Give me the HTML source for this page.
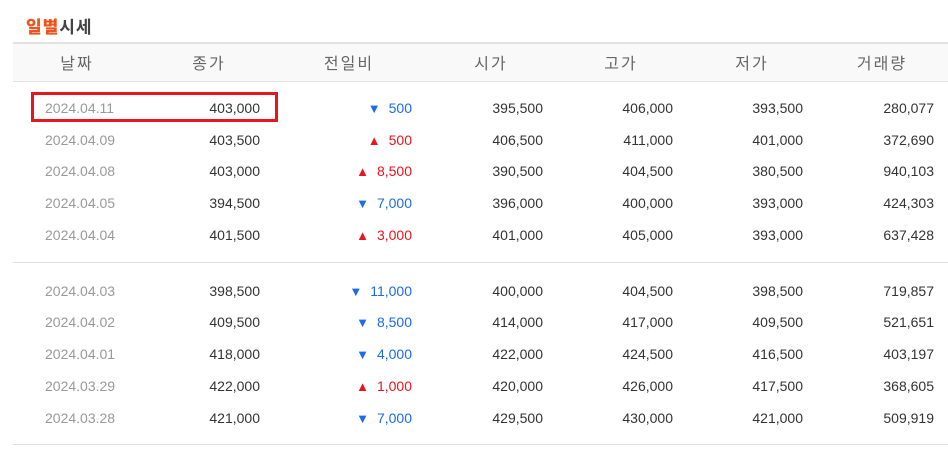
<!DOCTYPE html><html><head><meta charset="utf-8"><style>
body{margin:0;width:948px;height:450px;background:#fff;font-family:"Liberation Sans","Noto Sans CJK KR",sans-serif;position:relative;overflow:hidden}
.t{position:absolute;left:26px;top:13px;font-size:17px;font-weight:bold;color:#444;letter-spacing:1px}
.t b{color:#f0521c}
.hd{position:absolute;left:13px;right:0;top:42px;height:37px;background:#f9f9f9;border-top:2px solid #e2e2e2;border-bottom:1px solid #e2e2e2}
.h{position:absolute;top:50px;font-size:16px;color:#666;width:100px;text-align:center;letter-spacing:2px}
.r{position:absolute;left:0;width:948px;height:18px;font-size:14px;color:#333;line-height:18px}
.r span{position:absolute;white-space:nowrap}
.d{left:45px;color:#999}
.c{right:688px;text-align:right}
.g{right:536px}
.o{right:405px}.hi{right:275px}.lo{right:145px}.v{right:14px}
.u{color:#e8141e}.n{color:#1a6ce8}
.u i,.n i{font-style:normal;font-size:13px;margin-right:8px;position:relative;top:0px}
.line{position:absolute;left:13px;right:0;height:1px;background:#e0e0e0}
.box{position:absolute;left:31px;top:92px;width:241px;height:24px;border:3px solid #e8141e}
</style></head><body>
<div class="t"><b>일별</b>시세</div>
<div class="hd"></div>
<div class="h" style="left:27px">날짜</div>
<div class="h" style="left:159px">종가</div>
<div class="h" style="left:299px">전일비</div>
<div class="h" style="left:441px">시가</div>
<div class="h" style="left:571px">고가</div>
<div class="h" style="left:702px">저가</div>
<div class="h" style="left:832px">거래량</div>

<div class="r" style="top:99px"><span class="d">2024.04.11</span><span class="c">403,000</span><span class="g n"><i>▼</i>500</span><span class="o">395,500</span><span class="hi">406,000</span><span class="lo">393,500</span><span class="v">280,077</span></div>
<div class="r" style="top:131px"><span class="d">2024.04.09</span><span class="c">403,500</span><span class="g u"><i>▲</i>500</span><span class="o">406,500</span><span class="hi">411,000</span><span class="lo">401,000</span><span class="v">372,690</span></div>
<div class="r" style="top:162px"><span class="d">2024.04.08</span><span class="c">403,000</span><span class="g u"><i>▲</i>8,500</span><span class="o">390,500</span><span class="hi">404,500</span><span class="lo">380,500</span><span class="v">940,103</span></div>
<div class="r" style="top:194px"><span class="d">2024.04.05</span><span class="c">394,500</span><span class="g n"><i>▼</i>7,000</span><span class="o">396,000</span><span class="hi">400,000</span><span class="lo">393,000</span><span class="v">424,303</span></div>
<div class="r" style="top:226px"><span class="d">2024.04.04</span><span class="c">401,500</span><span class="g u"><i>▲</i>3,000</span><span class="o">401,000</span><span class="hi">405,000</span><span class="lo">393,000</span><span class="v">637,428</span></div>
<div class="line" style="top:262px"></div>
<div class="r" style="top:282px"><span class="d">2024.04.03</span><span class="c">398,500</span><span class="g n"><i>▼</i>11,000</span><span class="o">400,000</span><span class="hi">404,500</span><span class="lo">398,500</span><span class="v">719,857</span></div>
<div class="r" style="top:313px"><span class="d">2024.04.02</span><span class="c">409,500</span><span class="g n"><i>▼</i>8,500</span><span class="o">414,000</span><span class="hi">417,000</span><span class="lo">409,500</span><span class="v">521,651</span></div>
<div class="r" style="top:345px"><span class="d">2024.04.01</span><span class="c">418,000</span><span class="g n"><i>▼</i>4,000</span><span class="o">422,000</span><span class="hi">424,500</span><span class="lo">416,500</span><span class="v">403,197</span></div>
<div class="r" style="top:377px"><span class="d">2024.03.29</span><span class="c">422,000</span><span class="g u"><i>▲</i>1,000</span><span class="o">420,000</span><span class="hi">426,000</span><span class="lo">417,500</span><span class="v">368,605</span></div>
<div class="r" style="top:409px"><span class="d">2024.03.28</span><span class="c">421,000</span><span class="g n"><i>▼</i>7,000</span><span class="o">429,500</span><span class="hi">430,000</span><span class="lo">421,000</span><span class="v">509,919</span></div>
<div class="line" style="top:444px"></div>
<div class="box"></div>
</body></html>
